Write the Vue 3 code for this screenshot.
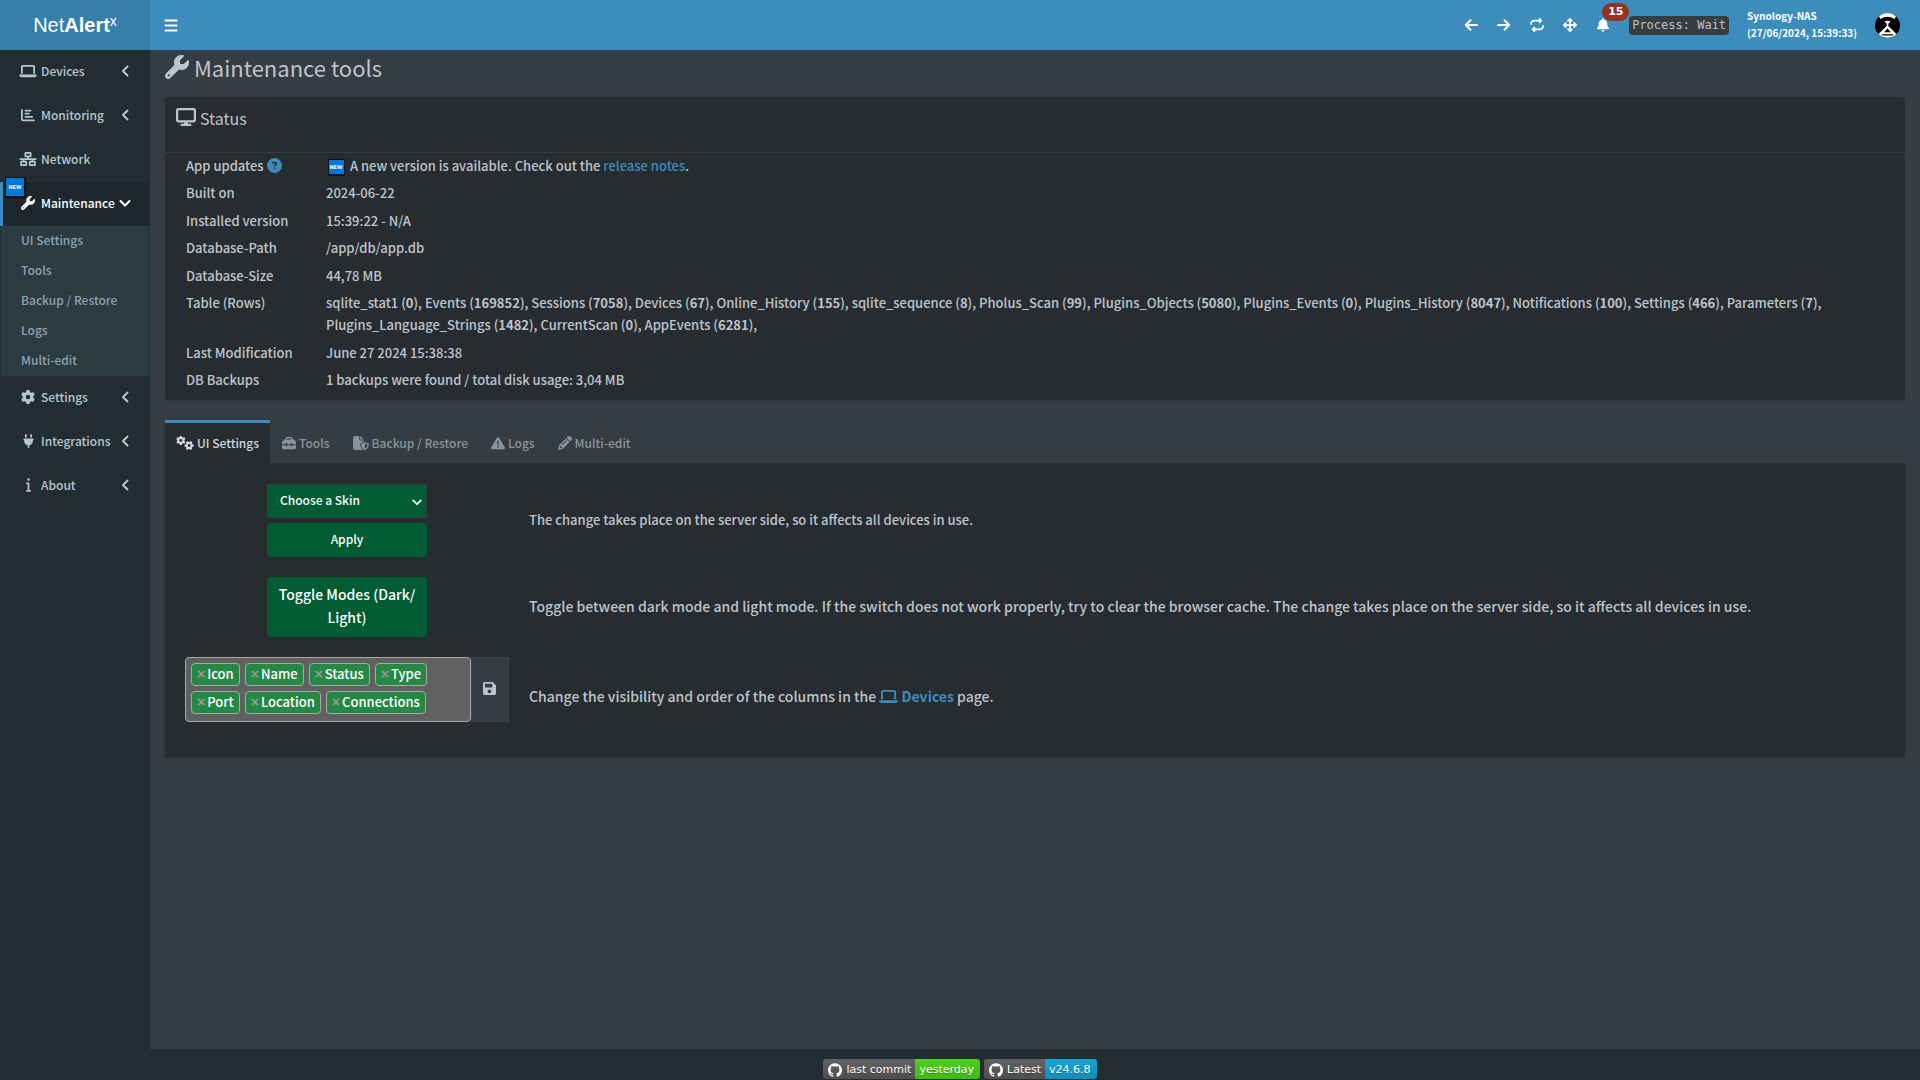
<script setup>
import { h, ref } from 'vue'

const glyphs = {
  wrench: ['0 0 512 512', 'M352 320c88.4 0 160-71.6 160-160c0-15.3-2.2-30.1-6.2-44.2c-3.1-10.8-16.4-13.2-24.3-5.3l-76.8 76.8c-3 3-7.1 4.7-11.3 4.7H336c-8.8 0-16-7.2-16-16V118.6c0-4.2 1.7-8.3 4.7-11.3l76.8-76.8c7.9-7.9 5.4-21.2-5.3-24.3C382.1 2.2 367.3 0 352 0C263.6 0 192 71.6 192 160c0 19.1 3.4 37.5 9.5 54.5L19.9 396.1C7.2 408.8 0 426.1 0 444.1C0 481.6 30.4 512 67.9 512c18 0 35.3-7.2 48-19.9L297.5 310.5c17 6.2 35.4 9.5 54.5 9.5zM80 408a24 24 0 1 1 0 48 24 24 0 1 1 0-48z'],
  laptop: ['0 0 640 512', 'M128 32C92.7 32 64 60.7 64 96V352h64V96H512V352h64V96c0-35.3-28.7-64-64-64H128zM19.2 384C8.6 384 0 392.6 0 403.2C0 445.6 34.4 480 76.8 480H563.2c42.4 0 76.8-34.4 76.8-76.8c0-10.6-8.6-19.2-19.2-19.2H19.2z'],
  chart: ['0 0 512 512', 'M32 32c17.7 0 32 14.3 32 32V400c0 8.8 7.2 16 16 16H480c17.7 0 32 14.3 32 32s-14.3 32-32 32H80c-44.2 0-80-35.8-80-80V64C0 46.3 14.3 32 32 32zm96 64c0-17.7 14.3-32 32-32l192 0c17.7 0 32 14.3 32 32s-14.3 32-32 32l-192 0c-17.7 0-32-14.3-32-32zm32 80H288c17.7 0 32 14.3 32 32s-14.3 32-32 32H160c-17.7 0-32-14.3-32-32s14.3-32 32-32zm0 112H416c17.7 0 32 14.3 32 32s-14.3 32-32 32H160c-17.7 0-32-14.3-32-32s14.3-32 32-32z'],
  network: ['0 0 640 512', 'M256 64H384v64H256V64zM240 0c-26.5 0-48 21.5-48 48v96c0 26.5 21.5 48 48 48h48v32H32c-17.7 0-32 14.3-32 32s14.3 32 32 32h96v32H80c-26.5 0-48 21.5-48 48v96c0 26.5 21.5 48 48 48H240c26.5 0 48-21.5 48-48V368c0-26.5-21.5-48-48-48H192V288H448v32H400c-26.5 0-48 21.5-48 48v96c0 26.5 21.5 48 48 48H560c26.5 0 48-21.5 48-48V368c0-26.5-21.5-48-48-48H512V288h96c17.7 0 32-14.3 32-32s-14.3-32-32-32H352V192h48c26.5 0 48-21.5 48-48V48c0-26.5-21.5-48-48-48H240zM96 448V384H224v64H96zm320-64H544v64H416V384z'],
  gear: ['0 0 512 512', 'M495.9 166.6c3.2 8.7 .5 18.4-6.4 24.6l-43.3 39.4c1.1 8.3 1.7 16.8 1.7 25.4s-.6 17.1-1.7 25.4l43.3 39.4c6.9 6.2 9.6 15.9 6.4 24.6c-4.4 11.9-9.7 23.3-15.8 34.3l-4.7 8.1c-6.6 11-14 21.4-22.1 31.2c-5.9 7.2-15.7 9.6-24.5 6.8l-55.7-17.7c-13.4 10.3-28.2 18.9-44 25.4l-12.5 57.1c-2 9.1-9 16.3-18.2 17.8c-13.8 2.3-28 3.5-42.5 3.5s-28.7-1.2-42.5-3.5c-9.2-1.5-16.2-8.7-18.2-17.8l-12.5-57.1c-15.8-6.5-30.6-15.1-44-25.4L83.1 425.9c-8.8 2.8-18.6 .3-24.5-6.8c-8.1-9.8-15.5-20.2-22.1-31.2l-4.7-8.1c-6.1-11-11.4-22.4-15.8-34.3c-3.2-8.7-.5-18.4 6.4-24.6l43.3-39.4C64.6 273.1 64 264.6 64 256s.6-17.1 1.7-25.4L22.4 191.2c-6.9-6.2-9.6-15.9-6.4-24.6c4.4-11.9 9.7-23.3 15.8-34.3l4.7-8.1c6.6-11 14-21.4 22.1-31.2c5.9-7.2 15.7-9.6 24.5-6.8l55.7 17.7c13.4-10.3 28.2-18.9 44-25.4l12.5-57.1c2-9.1 9-16.3 18.2-17.8C227.3 1.2 241.5 0 256 0s28.7 1.2 42.5 3.5c9.2 1.5 16.2 8.7 18.2 17.8l12.5 57.1c15.8 6.5 30.6 15.1 44 25.4l55.7-17.7c8.8-2.8 18.6-.3 24.5 6.8c8.1 9.8 15.5 20.2 22.1 31.2l4.7 8.1c6.1 11 11.4 22.4 15.8 34.3zM256 336a80 80 0 1 0 0-160 80 80 0 1 0 0 160z'],
  plug: ['0 0 384 512', 'M96 0C78.3 0 64 14.3 64 32v96h64V32c0-17.7-14.3-32-32-32zM288 0c-17.7 0-32 14.3-32 32v96h64V32c0-17.7-14.3-32-32-32zM32 160c-17.7 0-32 14.3-32 32s14.3 32 32 32v32c0 77.4 55 142 128 156.8V480c0 17.7 14.3 32 32 32s32-14.3 32-32V412.8C297 398 352 333.4 352 256V224c17.7 0 32-14.3 32-32s-14.3-32-32-32H32z'],
  info: ['0 0 192 512', 'M48 48a48 48 0 1 1 96 0A48 48 0 1 1 48 48zM0 192c0-17.7 14.3-32 32-32H96c17.7 0 32 14.3 32 32V448h32c17.7 0 32 14.3 32 32s-14.3 32-32 32H32c-17.7 0-32-14.3-32-32s14.3-32 32-32H64V224H32c-17.7 0-32-14.3-32-32z'],
  display: ['0 0 576 512', 'M64 0C28.7 0 0 28.7 0 64V352c0 35.3 28.7 64 64 64H240l-10.7 32H160c-17.7 0-32 14.3-32 32s14.3 32 32 32H416c17.7 0 32-14.3 32-32s-14.3-32-32-32H346.7L336 416H512c35.3 0 64-28.7 64-64V64c0-35.3-28.7-64-64-64H64zM512 64V352H64V64H512z'],
  toolbox: ['0 0 512 512', 'M176 88v40H336V88c0-4.4-3.6-8-8-8H184c-4.4 0-8 3.6-8 8zm-48 40V88c0-30.9 25.1-56 56-56H328c30.9 0 56 25.1 56 56v40h28.1c12.7 0 24.9 5.1 33.9 14.1l51.9 51.9c9 9 14.1 21.2 14.1 33.9V304H384V288c0-17.7-14.3-32-32-32s-32 14.3-32 32v16H192V288c0-17.7-14.3-32-32-32s-32 14.3-32 32v16H0V227.9c0-12.7 5.1-24.9 14.1-33.9l51.9-51.9c9-9 21.2-14.1 33.9-14.1H128zM0 416V336H128v16c0 17.7 14.3 32 32 32s32-14.3 32-32V336H320v16c0 17.7 14.3 32 32 32s32-14.3 32-32V336H512v80c0 35.3-28.7 64-64 64H64c-35.3 0-64-28.7-64-64z'],
  fileShield: ['0 0 576 512', 'M0 64C0 28.7 28.7 0 64 0H224V128c0 17.7 14.3 32 32 32H384v47l-92.8 37.1c-21.3 8.5-35.2 29.1-35.2 52c0 56.6 18.9 148 94.2 208.3c-9 4.8-19.3 7.6-30.2 7.6H64c-35.3 0-64-28.7-64-64V64zm384 64H256V0L384 128zm39.1 97.7c5.7-2.3 12.1-2.3 17.8 0l120 48C570 277.4 576 286.2 576 296c0 63.3-25.9 168.8-134.8 214.2c-5.9 2.5-12.6 2.5-18.5 0C313.9 464.8 288 359.3 288 296c0-9.8 6-18.6 15.1-22.3l120-48zM527.4 312L432 273.8V461.7c68.2-33 91.5-99 95.4-149.7z'],
  warning: ['0 0 512 512', 'M256 32c14.2 0 27.3 7.5 34.5 19.8l216 368c7.3 12.4 7.3 27.7 .2 40.1S486.3 480 472 480H40c-14.3 0-27.6-7.7-34.7-20.1s-7-27.8 .2-40.1l216-368C228.7 39.5 241.8 32 256 32zm0 128c-13.3 0-24 10.7-24 24V296c0 13.3 10.7 24 24 24s24-10.7 24-24V184c0-13.3-10.7-24-24-24zm32 224a32 32 0 1 0 -64 0 32 32 0 1 0 64 0z'],
  pencil: ['0 0 512 512', 'M410.3 231l11.3-11.3-33.9-33.9-62.1-62.1L291.7 89.8l-11.3 11.3-22.6 22.6L58.6 322.9c-10.4 10.4-18 23.3-22.2 37.4L1 480.7c-2.5 8.4-.2 17.5 6.1 23.7s15.3 8.5 23.7 6.1l120.3-35.4c14.1-4.2 27-11.8 37.4-22.2L387.7 253.7 410.3 231zM160 399.4l-9.1 22.7c-4 3.1-8.5 5.4-13.3 6.9L59.4 452l23-78.1c1.4-4.9 3.8-9.4 6.9-13.3l22.7-9.1v32c0 8.8 7.2 16 16 16h32zM362.7 18.7L348.3 33.2 325.7 55.8 314.3 67.1l33.9 33.9 62.1 62.1 33.9 33.9 11.3-11.3 22.6-22.6 14.5-14.5c25-25 25-65.5 0-90.5L453.3 18.7c-25-25-65.5-25-90.5 0zm-47.4 168l-144 144c-6.2 6.2-16.4 6.2-22.6 0s-6.2-16.4 0-22.6l144-144c6.2-6.2 16.4-6.2 22.6 0s6.2 16.4 0 22.6z'],
  save: ['0 0 448 512', 'M64 32C28.7 32 0 60.7 0 96V416c0 35.3 28.7 64 64 64H384c35.3 0 64-28.7 64-64V173.3c0-17-6.7-33.3-18.7-45.3L352 50.7C340 38.7 323.7 32 306.7 32H64zm0 96c0-17.7 14.3-32 32-32H288c17.7 0 32 14.3 32 32v64c0 17.7-14.3 32-32 32H96c-17.7 0-32-14.3-32-32V128zM224 288a64 64 0 1 1 0 128 64 64 0 1 1 0-128z'],
  question: ['0 0 512 512', 'M256 512A256 256 0 1 0 256 0a256 256 0 1 0 0 512zM169.8 165.3c7.9-22.3 29.1-37.3 52.8-37.3h58.3c34.9 0 63.1 28.3 63.1 63.1c0 22.6-12.1 43.5-31.7 54.8L280 264.4c-.2 13-10.9 23.6-24 23.6c-13.3 0-24-10.7-24-24V250.5c0-8.6 4.6-16.5 12.1-20.8l44.3-25.4c4.7-2.7 7.6-7.7 7.6-13.1c0-8.4-6.8-15.1-15.1-15.1H222.6c-3.4 0-6.4 2.1-7.5 5.3l-.4 1.2c-4.4 12.5-18.2 19-30.6 14.6s-19-18.2-14.6-30.6l.4-1.2zM224 352a32 32 0 1 1 64 0 32 32 0 1 1 -64 0z'],
  repeat: ['0 0 512 512', 'M0 224c0 17.7 14.3 32 32 32s32-14.3 32-32c0-53 43-96 96-96H320v32c0 12.9 7.8 24.6 19.8 29.6s25.7 2.2 34.9-6.9l64-64c12.5-12.5 12.5-32.8 0-45.3l-64-64c-9.2-9.2-22.9-11.9-34.9-6.9S320 19.1 320 32V64H160C71.6 64 0 135.6 0 224zm512 64c0-17.7-14.3-32-32-32s-32 14.3-32 32c0 53-43 96-96 96H192V352c0-12.9-7.8-24.6-19.8-29.6s-25.7-2.2-34.9 6.9l-64 64c-12.5 12.5-12.5 32.8 0 45.3l64 64c9.2 9.2 22.9 11.9 34.9 6.9s19.8-16.6 19.8-29.6V448H352c88.4 0 160-71.6 160-160z'],
  move: ['0 0 512 512', 'M256 0c9 0 17 4 23 9l80 80c16 16 5 39-17 39H288v96h96v-54c0-22 23-33 39-17l80 80c12 13 12 33 0 46l-80 80c-16 16-39 5-39-17v-54h-96v96h54c22 0 33 23 17 39l-80 80c-13 12-33 12-46 0l-80-80c-16-16-5-39 17-39h54v-96h-96v54c0 22-23 33-39 17L9 279c-12-13-12-33 0-46l80-80c16-16 39-5 39 17v54h96v-96h-54c-22 0-33-23-17-39l80-80c6-5 14-9 23-9z'],
  bell: ['0 0 448 512', 'M224 0c-17.7 0-32 14.3-32 32V51.2C119 66 64 130.6 64 208v18.8c0 47-17.3 92.4-48.5 127.6l-7.4 8.3c-8.4 9.4-10.4 22.9-5.3 34.4S19.4 416 32 416H416c12.6 0 24-7.4 29.2-18.9s3.1-25-5.3-34.4l-7.4-8.3C401.3 319.2 384 273.9 384 226.8V208c0-77.4-55-142-128-156.8V32c0-17.7-14.3-32-32-32zm45.3 493.3c12-12 18.7-28.3 18.7-45.3H224 160c0 17 6.7 33.3 18.7 45.3s28.3 18.7 45.3 18.7s33.3-6.7 45.3-18.7z'],
  github: ['0 0 24 24', 'M12 .297c-6.63 0-12 5.373-12 12 0 5.303 3.438 9.8 8.205 11.385.6.113.82-.258.82-.577 0-.285-.01-1.04-.015-2.04-3.338.724-4.042-1.61-4.042-1.61C4.422 18.07 3.633 17.7 3.633 17.7c-1.087-.744.084-.729.084-.729 1.205.084 1.838 1.236 1.838 1.236 1.07 1.835 2.809 1.305 3.495.998.108-.776.417-1.305.76-1.605-2.665-.3-5.466-1.332-5.466-5.93 0-1.31.465-2.38 1.235-3.22-.135-.303-.54-1.523.105-3.176 0 0 1.005-.322 3.3 1.23.96-.267 1.98-.399 3-.405 1.02.006 2.04.138 3 .405 2.28-1.552 3.285-1.23 3.285-1.23.645 1.653.24 2.873.12 3.176.765.84 1.23 1.91 1.23 3.22 0 4.61-2.805 5.625-5.475 5.92.42.36.81 1.096.81 2.22 0 1.606-.015 2.896-.015 3.286 0 .315.21.69.825.57C20.565 22.092 24 17.592 24 12.297c0-6.627-5.373-12-12-12'],
}

const lines = {
  bars: ['0 0 14 14', 'M1.500 2.500H12.500M1.500 7.500H12.500M1.500 12.500H12.500'],
  arrowLeft: ['0 0 14 14', 'M13 7H2M6.500 2.300L1.800 7L6.500 11.700'],
  arrowRight: ['0 0 14 14', 'M1 7H12M7.500 2.300L12.200 7L7.500 11.700'],
  angleLeft: ['0 0 14 14', 'M9.500 2.500L5 7L9.500 11.500'],
  angleDown: ['0 0 14 14', 'M2.500 5L7 9.500L11.500 5'],
}

const Icon = (props) => {
  const size = props.size || 14
  const filled = glyphs[props.name]
  const [box, d] = filled || lines[props.name]
  const [, , w, ht] = box.split(' ').map(Number)
  return h('svg', {
    viewBox: box,
    width: Math.round((size * w) / ht),
    height: size,
    'aria-hidden': 'true',
    fill: filled ? 'currentColor' : 'none',
    stroke: filled ? 'none' : 'currentColor',
    'stroke-width': filled ? null : 2,
    'stroke-linecap': 'round',
    'stroke-linejoin': 'round',
  }, [h('path', { d, 'fill-rule': 'evenodd' })])
}
Icon.props = ['name', 'size']

const menuTop = [
  { label: 'Devices', icon: 'laptop', arrow: 'angleLeft' },
  { label: 'Monitoring', icon: 'chart', arrow: 'angleLeft' },
  { label: 'Network', icon: 'network' },
  {
    label: 'Maintenance', icon: 'wrench', arrow: 'angleDown', active: true,
    children: ['UI Settings', 'Tools', 'Backup / Restore', 'Logs', 'Multi-edit'],
  },
  { label: 'Settings', icon: 'gear', arrow: 'angleLeft' },
  { label: 'Integrations', icon: 'plug', arrow: 'angleLeft' },
  { label: 'About', icon: 'info', arrow: 'angleLeft' },
]

const actions = [
  { name: 'arrowLeft', label: 'Back' },
  { name: 'arrowRight', label: 'Forward' },
  { name: 'repeat', label: 'Reload' },
  { name: 'move', label: 'Full screen' },
]

const tables = [
  ['sqlite_stat1', 0], ['Events', 169852], ['Sessions', 7058], ['Devices', 67],
  ['Online_History', 155], ['sqlite_sequence', 8], ['Pholus_Scan', 99],
  ['Plugins_Objects', 5080], ['Plugins_Events', 0], ['Plugins_History', 8047],
  ['Notifications', 100], ['Settings', 466], ['Parameters', 7],
  ['Plugins_Language_Strings', 1482], ['CurrentScan', 0], ['AppEvents', 6281],
]

const tabs = [
  { label: 'UI Settings', icon: 'gears' },
  { label: 'Tools', icon: 'toolbox' },
  { label: 'Backup / Restore', icon: 'fileShield' },
  { label: 'Logs', icon: 'warning' },
  { label: 'Multi-edit', icon: 'pencil' },
]
const activeTab = ref(0)

const columns = ref(['Icon', 'Name', 'Status', 'Type', 'Port', 'Location', 'Connections'])
const removeColumn = (name) => {
  columns.value = columns.value.filter((c) => c !== name)
}
</script>

<template>
  <div class="page">
    <header class="topbar">
      <a class="logo" href="#">Net<b>Alert</b><sup>x</sup></a>
      <nav class="navbar" aria-label="Toolbar">
        <button class="nav-btn toggle" aria-label="Toggle navigation"><Icon name="bars" /></button>
        <div class="nav-right">
          <button v-for="a in actions" :key="a.name" class="nav-btn" :aria-label="a.label"><Icon :name="a.name" /></button>
          <button class="nav-btn bell" aria-label="Notifications">
            <Icon name="bell" />
            <span class="count">15</span>
          </button>
          <code class="process">Process: Wait</code>
          <div class="host">
            <span>Synology-NAS</span>
            <span>(27/06/2024, 15:39:33)</span>
          </div>
          <a class="avatar" href="#" aria-label="User menu">
            <svg viewBox="0 0 25 25" width="25" height="25" aria-hidden="true">
              <circle cx="12.500" cy="12.500" r="12.500" fill="#000" />
              <path d="M4 3.400A12.500 12.500 0 0 1 21 3.400L19.500 6Q12.500 1.500 5.500 6Z" fill="#fff" />
              <path d="M9.500 8.400Q12.500 7 15.500 8.400L13.300 10.800V13L21.500 21A12.500 12.500 0 0 1 3.500 21L11.700 13V10.800Z" fill="#fff" />
              <path d="M12.500 15.500L16 19.300H9Z" fill="#000" />
              <path d="M6.500 21.300H18.500L17.500 22.400H7.500Z" fill="#000" />
            </svg>
          </a>
        </div>
      </nav>
    </header>

    <div class="body">
      <aside class="sidebar">
        <ul class="menu">
          <li v-for="m in menuTop" :key="m.label" :class="{ active: m.active }">
            <a class="menu-link" href="#">
              <span class="menu-icon"><Icon :name="m.icon" /></span>
              <span>{{ m.label }}</span>
              <Icon v-if="m.arrow" class="menu-arrow" :name="m.arrow" />
              <svg v-if="m.active" class="menu-new" viewBox="0 0 21 21" width="21" height="21">
                <rect width="21" height="21" rx="1" fill="#0b1216" />
                <rect x="1" y="1" width="18" height="18" fill="#0078d7" />
                <text x="10" y="12" text-anchor="middle">NEW</text>
              </svg>
            </a>
            <ul v-if="m.children" class="submenu">
              <li v-for="c in m.children" :key="c"><a href="#">{{ c }}</a></li>
            </ul>
          </li>
        </ul>
      </aside>

      <main class="content">
        <h1 class="title"><Icon name="wrench" :size="24" />Maintenance tools</h1>

        <section class="box">
          <h2 class="box-title"><Icon name="display" :size="18" />Status</h2>
          <table class="info">
            <tbody>
              <tr>
                <th scope="row">App updates <a href="#" class="help" aria-label="Help"><Icon name="question" :size="15" /></a></th>
                <td>
                  <svg class="new" viewBox="0 0 17 17" width="17" height="17">
                    <rect width="17" height="17" rx="1" fill="#0b1216" />
                    <rect x="1" y="1" width="15" height="14" fill="#0078d7" />
                    <text x="8" y="10" text-anchor="middle">NEW</text>
                  </svg>
                  A new version is available. Check out the <a href="#">release notes</a>.
                </td>
              </tr>
              <tr><th scope="row">Built on</th><td>2024-06-22</td></tr>
              <tr><th scope="row">Installed version</th><td>15:39:22 - N/A</td></tr>
              <tr><th scope="row">Database-Path</th><td>/app/db/app.db</td></tr>
              <tr><th scope="row">Database-Size</th><td>44,78 MB</td></tr>
              <tr>
                <th scope="row">Table (Rows)</th>
                <td><template v-for="[name, rows] in tables" :key="name">{{ name }} (<b>{{ rows }}</b>), </template></td>
              </tr>
              <tr><th scope="row">Last Modification</th><td>June 27 2024 15:38:38</td></tr>
              <tr><th scope="row">DB Backups</th><td>1 backups were found / total disk usage: 3,04 MB</td></tr>
            </tbody>
          </table>
        </section>

        <section class="tabs-box">
          <div class="tabs" role="tablist">
            <button
              v-for="(t, i) in tabs" :key="t.label" class="tab" role="tab"
              :class="{ active: i === activeTab }" :aria-selected="i === activeTab" @click="activeTab = i"
            >
              <svg v-if="t.icon === 'gears'" viewBox="0 0 640 512" width="18" height="14" fill="currentColor" aria-hidden="true">
                <path transform="translate(-6 -12) scale(.68)" fill-rule="evenodd" :d="glyphs.gear[1]" />
                <path transform="translate(640 180) rotate(90) scale(.66)" fill-rule="evenodd" :d="glyphs.gear[1]" />
              </svg>
              <Icon v-else :name="t.icon" />
              {{ t.label }}
            </button>
          </div>
          <div class="pane">
            <div class="setting">
              <div class="control">
                <div class="select-wrap">
                  <select class="skin" aria-label="Choose a Skin"><option>Choose a Skin</option></select>
                  <Icon class="caret" name="angleDown" :size="12" />
                </div>
                <button class="btn">Apply</button>
              </div>
              <p>The change takes place on the server side, so it affects all devices in use.</p>
            </div>
            <div class="setting large">
              <div class="control"><button class="btn big">Toggle Modes (Dark/<wbr>Light)</button></div>
              <p>Toggle between dark mode and light mode. If the switch does not work properly, try to clear the browser cache. The change takes place on the server side, so it affects all devices in use.</p>
            </div>
            <div class="setting large columns">
              <div class="picker">
                <ul class="tags">
                  <li v-for="c in columns" :key="c">
                    <button :aria-label="'Remove ' + c" @click="removeColumn(c)">×</button>{{ c }}
                  </li>
                </ul>
                <button class="save" aria-label="Save"><Icon name="save" :size="15" /></button>
              </div>
              <p>Change the visibility and order of the columns in the <a href="#"><Icon name="laptop" :size="15" /> <b>Devices</b></a> page.</p>
            </div>
          </div>
        </section>
      </main>
    </div>

    <footer class="footer">
      <a class="badge" href="#"><span><Icon name="github" />last commit</span><span class="green">yesterday</span></a>
      <a class="badge" href="#"><span><Icon name="github" />Latest</span><span class="blue">v24.6.8</span></a>
    </footer>
  </div>
</template>

<style>
body {
  margin: 0;
  background: #353c42;
}
</style>

<style scoped>
.page {
  display: flex;
  flex-direction: column;
  min-height: 100vh;
  font: 500 13px/22px "Noto Sans CJK SC", "Noto Sans", sans-serif;
  color: #bec5cb;
}
.page * {
  box-sizing: border-box;
}
svg {
  flex: none;
}
a {
  color: #3c8dbc;
  text-decoration: none;
}
button,
select {
  font: inherit;
  cursor: pointer;
}
ul {
  list-style: none;
  margin: 0;
  padding: 0;
}
p {
  margin: 0;
}

.topbar {
  display: flex;
  height: 50px;
  background: #3c8dbc;
}
.logo {
  flex: none;
  width: 150px;
  background: #367fa9;
  color: #fff;
  font: 20px/50px "Liberation Sans", Arial, sans-serif;
  text-align: center;
}
.logo sup {
  font-size: 14px;
  line-height: 0;
  vertical-align: 6px;
}
.navbar {
  flex: 1;
  display: flex;
  justify-content: space-between;
}
.nav-btn {
  display: flex;
  align-items: center;
  justify-content: center;
  width: 33px;
  padding: 0;
  border: 0;
  background: none;
  color: #fff;
}
.toggle {
  width: 42px;
}
.nav-right {
  display: flex;
  align-items: center;
  padding-right: 20px;
}
.nav-right .nav-btn {
  height: 50px;
}
.bell {
  position: relative;
}
.count {
  position: absolute;
  top: 3px;
  left: 16px;
  padding: 0 6px;
  border-radius: 9px;
  background: #913225;
  font: bold 11px/18px "DejaVu Sans", sans-serif;
}
.process {
  margin-left: 10px;
  padding: 0 3px;
  border-radius: 4px;
  background: #353c42;
  color: #bec5cb;
  font: 12px/19px "DejaVu Sans Mono", monospace;
}
.host {
  display: flex;
  flex-direction: column;
  margin-left: 18px;
  padding-bottom: 2px;
  color: #fff;
  font-size: 10px;
  line-height: 17px;
  font-weight: 700;
}
.avatar {
  display: flex;
  margin-left: 18px;
}

.body {
  flex: 1;
  display: flex;
}
.sidebar {
  flex: none;
  width: 150px;
  background: #222d32;
}
.menu-link {
  position: relative;
  display: flex;
  align-items: center;
  gap: 4px;
  height: 44px;
  padding: 0 15px 2px 16px;
  border-left: 3px solid transparent;
  color: #b8c7ce;
  font-size: 12px;
}
.menu-icon {
  display: flex;
  justify-content: center;
  width: 18px;
}
.menu-arrow {
  position: absolute;
  right: 18px;
}
.active > .menu-link {
  border-left-color: #3c8dbc;
  background: #1e282c;
  color: #fff;
}
.menu-new {
  position: absolute;
  left: 2px;
  top: -5px;
}
.menu-new text,
.new text {
  fill: #fff;
  font: bold 5px "DejaVu Sans", sans-serif;
}
.submenu {
  margin: 0 1px;
  background: #2c3b41;
}
.submenu a {
  display: block;
  padding: 0 0 2px 20px;
  color: #8aa4af;
  font-size: 12px;
  line-height: 28px;
}

.content {
  flex: 1;
  min-width: 0;
  padding: 0 15px;
}
.title {
  display: flex;
  align-items: center;
  gap: 5px;
  height: 47px;
  margin: 0;
  padding-bottom: 13px;
  font-size: 22px;
  font-weight: 400;
}
.box {
  background: #272c30;
  border-radius: 3px;
  box-shadow: 0 1px 1px rgba(0, 0, 0, .1);
  padding-bottom: 5px;
}
.box-title {
  display: flex;
  align-items: flex-start;
  gap: 4px;
  height: 56px;
  margin: 0;
  padding: 11px;
  border-bottom: 1px solid #353c42;
  font-size: 16px;
  line-height: 20px;
  font-weight: 400;
}
.info {
  width: 100%;
  border-collapse: collapse;
}
.info th,
.info td {
  padding: 2px 20px 3px 21px;
  font-weight: 500;
  text-align: left;
  vertical-align: top;
}
.info tr:nth-child(even) > * {
  padding-bottom: 4px;
}
.info th {
  width: 140px;
  padding-right: 0;
  white-space: nowrap;
}
.help svg,
.setting p svg {
  vertical-align: -2px;
}
.info td svg {
  margin: -3px 2px;
  vertical-align: -2px;
}

.tabs-box {
  margin-top: 20px;
  background: #272c30;
  box-shadow: 0 1px 1px rgba(0, 0, 0, .1);
}
.tabs {
  display: flex;
  background: #353c42;
  gap: 1px;
}
.tab {
  display: flex;
  align-items: center;
  gap: 3px;
  height: 43px;
  padding: 0 11px;
  border: 0;
  border-top: 3px solid transparent;
  background: none;
  color: #8c949b;
  font-size: 12px;
}
.tab.active {
  border-top-color: #3c8dbc;
  background: #272c30;
  color: #d2d6de;
}
.pane {
  display: flex;
  flex-direction: column;
  gap: 20px;
  padding: 21px 20px 20px;
}
.setting {
  display: grid;
  grid-template-columns: 324px 1fr;
  gap: 20px;
  align-items: center;
}
.setting p {
  padding-bottom: 2px;
}
.large p {
  font-size: 14px;
}
.columns {
  min-height: 80px;
}
.control {
  display: flex;
  flex-direction: column;
  gap: 5px;
  width: 160px;
  margin: 0 auto;
}
.select-wrap {
  position: relative;
}
.skin {
  display: block;
  appearance: none;
  width: 100%;
  height: 34px;
  padding: 0 12px 2px;
  border: 1px solid #353c42;
  border-radius: 0;
  background: #005c32;
  color: #fff;
  font-size: 12px;
}
.caret {
  position: absolute;
  right: 4px;
  top: 12px;
  color: #fff;
  pointer-events: none;
}
.btn {
  min-height: 34px;
  padding: 0 10px 2px;
  border: 0;
  border-radius: 3px;
  background: #005c32;
  color: #fff;
  font-size: 12px;
}
.big {
  min-height: 60px;
  font-size: 14px;
  line-height: 23px;
}
.picker {
  display: flex;
  align-self: start;
  min-height: 65px;
}
.tags {
  flex: 1;
  display: flex;
  flex-wrap: wrap;
  align-content: flex-start;
  gap: 5px;
  padding: 5px;
  border: 1px solid #aaa;
  border-radius: 4px;
  background: #616161;
}
.tags li {
  display: flex;
  align-items: center;
  height: 23px;
  padding: 0 5px 2px;
  border: 1px solid #aaa;
  border-radius: 4px;
  background: #258845;
  color: #fff;
}
.tags button {
  padding: 0 2px 0 0;
  border: 0;
  background: none;
  color: #999;
  font: bold 14px/20px "Liberation Sans", sans-serif;
}
.save {
  display: flex;
  align-items: center;
  justify-content: center;
  width: 38px;
  padding: 0 2px 2px 0;
  border: 1px solid #3d444a;
  background: #353c42;
  color: #bec5cb;
}

.footer {
  display: flex;
  justify-content: center;
  gap: 4px;
  padding: 10px 0 1px;
  background: #222d32;
}
.badge {
  display: flex;
  overflow: hidden;
  border-radius: 3px;
  color: #fff;
  font: 11px/18px "DejaVu Sans", Verdana, sans-serif;
  text-shadow: 0 1px 0 rgba(1, 1, 1, .3);
}
.badge span {
  display: flex;
  align-items: center;
  gap: 4px;
  padding: 2px 4px 0 5px;
  background: linear-gradient(#626262, #4e4e4e);
}
.badge .green {
  padding: 2px 6px 0 4px;
  background: linear-gradient(#4fcf1f, #40b90f);
}
.badge .blue {
  padding: 2px 6px 0 4px;
  background: linear-gradient(#17a5d2, #0c8fba);
}
</style>
